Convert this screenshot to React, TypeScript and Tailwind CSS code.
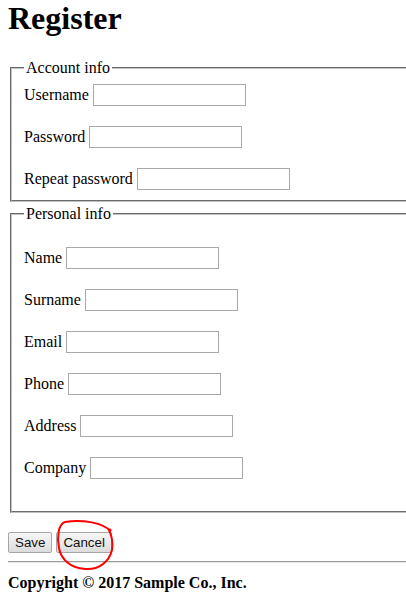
import React from 'react';

const accountFields = ['Username', 'Password', 'Repeat password'];
const personalFields = ['Name', 'Surname', 'Email', 'Phone', 'Address', 'Company'];

function Row({ label }: { label: string }) {
  return (
    <div className="flex h-[22px] items-center">
      <label className="leading-normal">{label}</label>
      <input
        type={label.toLowerCase().includes('password') ? 'password' : 'text'}
        className="ml-[4px] h-[22px] w-[153px] border border-[#a9a9a9] bg-white outline-none"
      />
    </div>
  );
}

export default function App() {
  return (
    <div className="min-h-screen overflow-x-hidden bg-white text-black">
      <div className="w-[460px] px-2 font-['Liberation_Serif','Times_New_Roman',serif] text-[16px]">
        <h1 className="text-[32px] font-bold leading-[37px]">Register</h1>

        <form className="mt-[19px]">
          <fieldset className="mx-[2px] flex flex-col gap-[20px] border-2 border-[#c0c0c0] px-[12px] pb-[10px] pt-[4px] [border-style:groove]">
            <legend className="px-[2px] leading-normal">Account info</legend>
            {accountFields.map((f) => (
              <Row key={f} label={f} />
            ))}
          </fieldset>

          <fieldset className="mx-[2px] flex flex-col gap-[20px] border-2 border-[#c0c0c0] px-[12px] pb-[32px] pt-[21px] [border-style:groove]">
            <legend className="px-[2px] leading-normal">Personal info</legend>
            {personalFields.map((f) => (
              <Row key={f} label={f} />
            ))}
          </fieldset>

          <div className="mt-[19px] flex gap-[4px] font-['Liberation_Sans',Arial,sans-serif] text-[13.33px]">
            <button
              type="button"
              className="h-[21px] rounded-[2px] border border-[#a6a6a6] bg-gradient-to-b from-[#f6f6f6] to-[#dcdcdc] px-[6px] leading-none text-[#111]"
            >
              Save
            </button>
            <span className="relative">
              <button
                type="button"
                className="h-[21px] rounded-[2px] border border-[#a6a6a6] bg-gradient-to-b from-[#f6f6f6] to-[#dcdcdc] px-[6px] leading-none text-[#111]"
              >
                Cancel
              </button>
              <svg
                className="pointer-events-none absolute left-[-4px] top-[-14px]"
                width="64"
                height="56"
                viewBox="0 0 64 56"
                fill="none"
              >
                <path
                  d="M58 13 C52 5, 30 1, 13 4 C6 6, 5 20, 7 30 C9 41, 18 50, 33 51 C47 52, 57 44, 60 32 C61 25, 60 18, 57 12"
                  stroke="#ff0000"
                  strokeWidth="2"
                  strokeLinecap="round"
                />
                <circle cx="58" cy="12" r="1.6" fill="#ff0000" />
              </svg>
            </span>
          </div>
        </form>

        <div className="mt-[8px] border-t border-b border-t-[#9a9a9a] border-b-[#e6e6e6]" />
        <p className="mt-[8px] font-bold leading-normal">Copyright © 2017 Sample Co., Inc.</p>
      </div>
    </div>
  );
}
